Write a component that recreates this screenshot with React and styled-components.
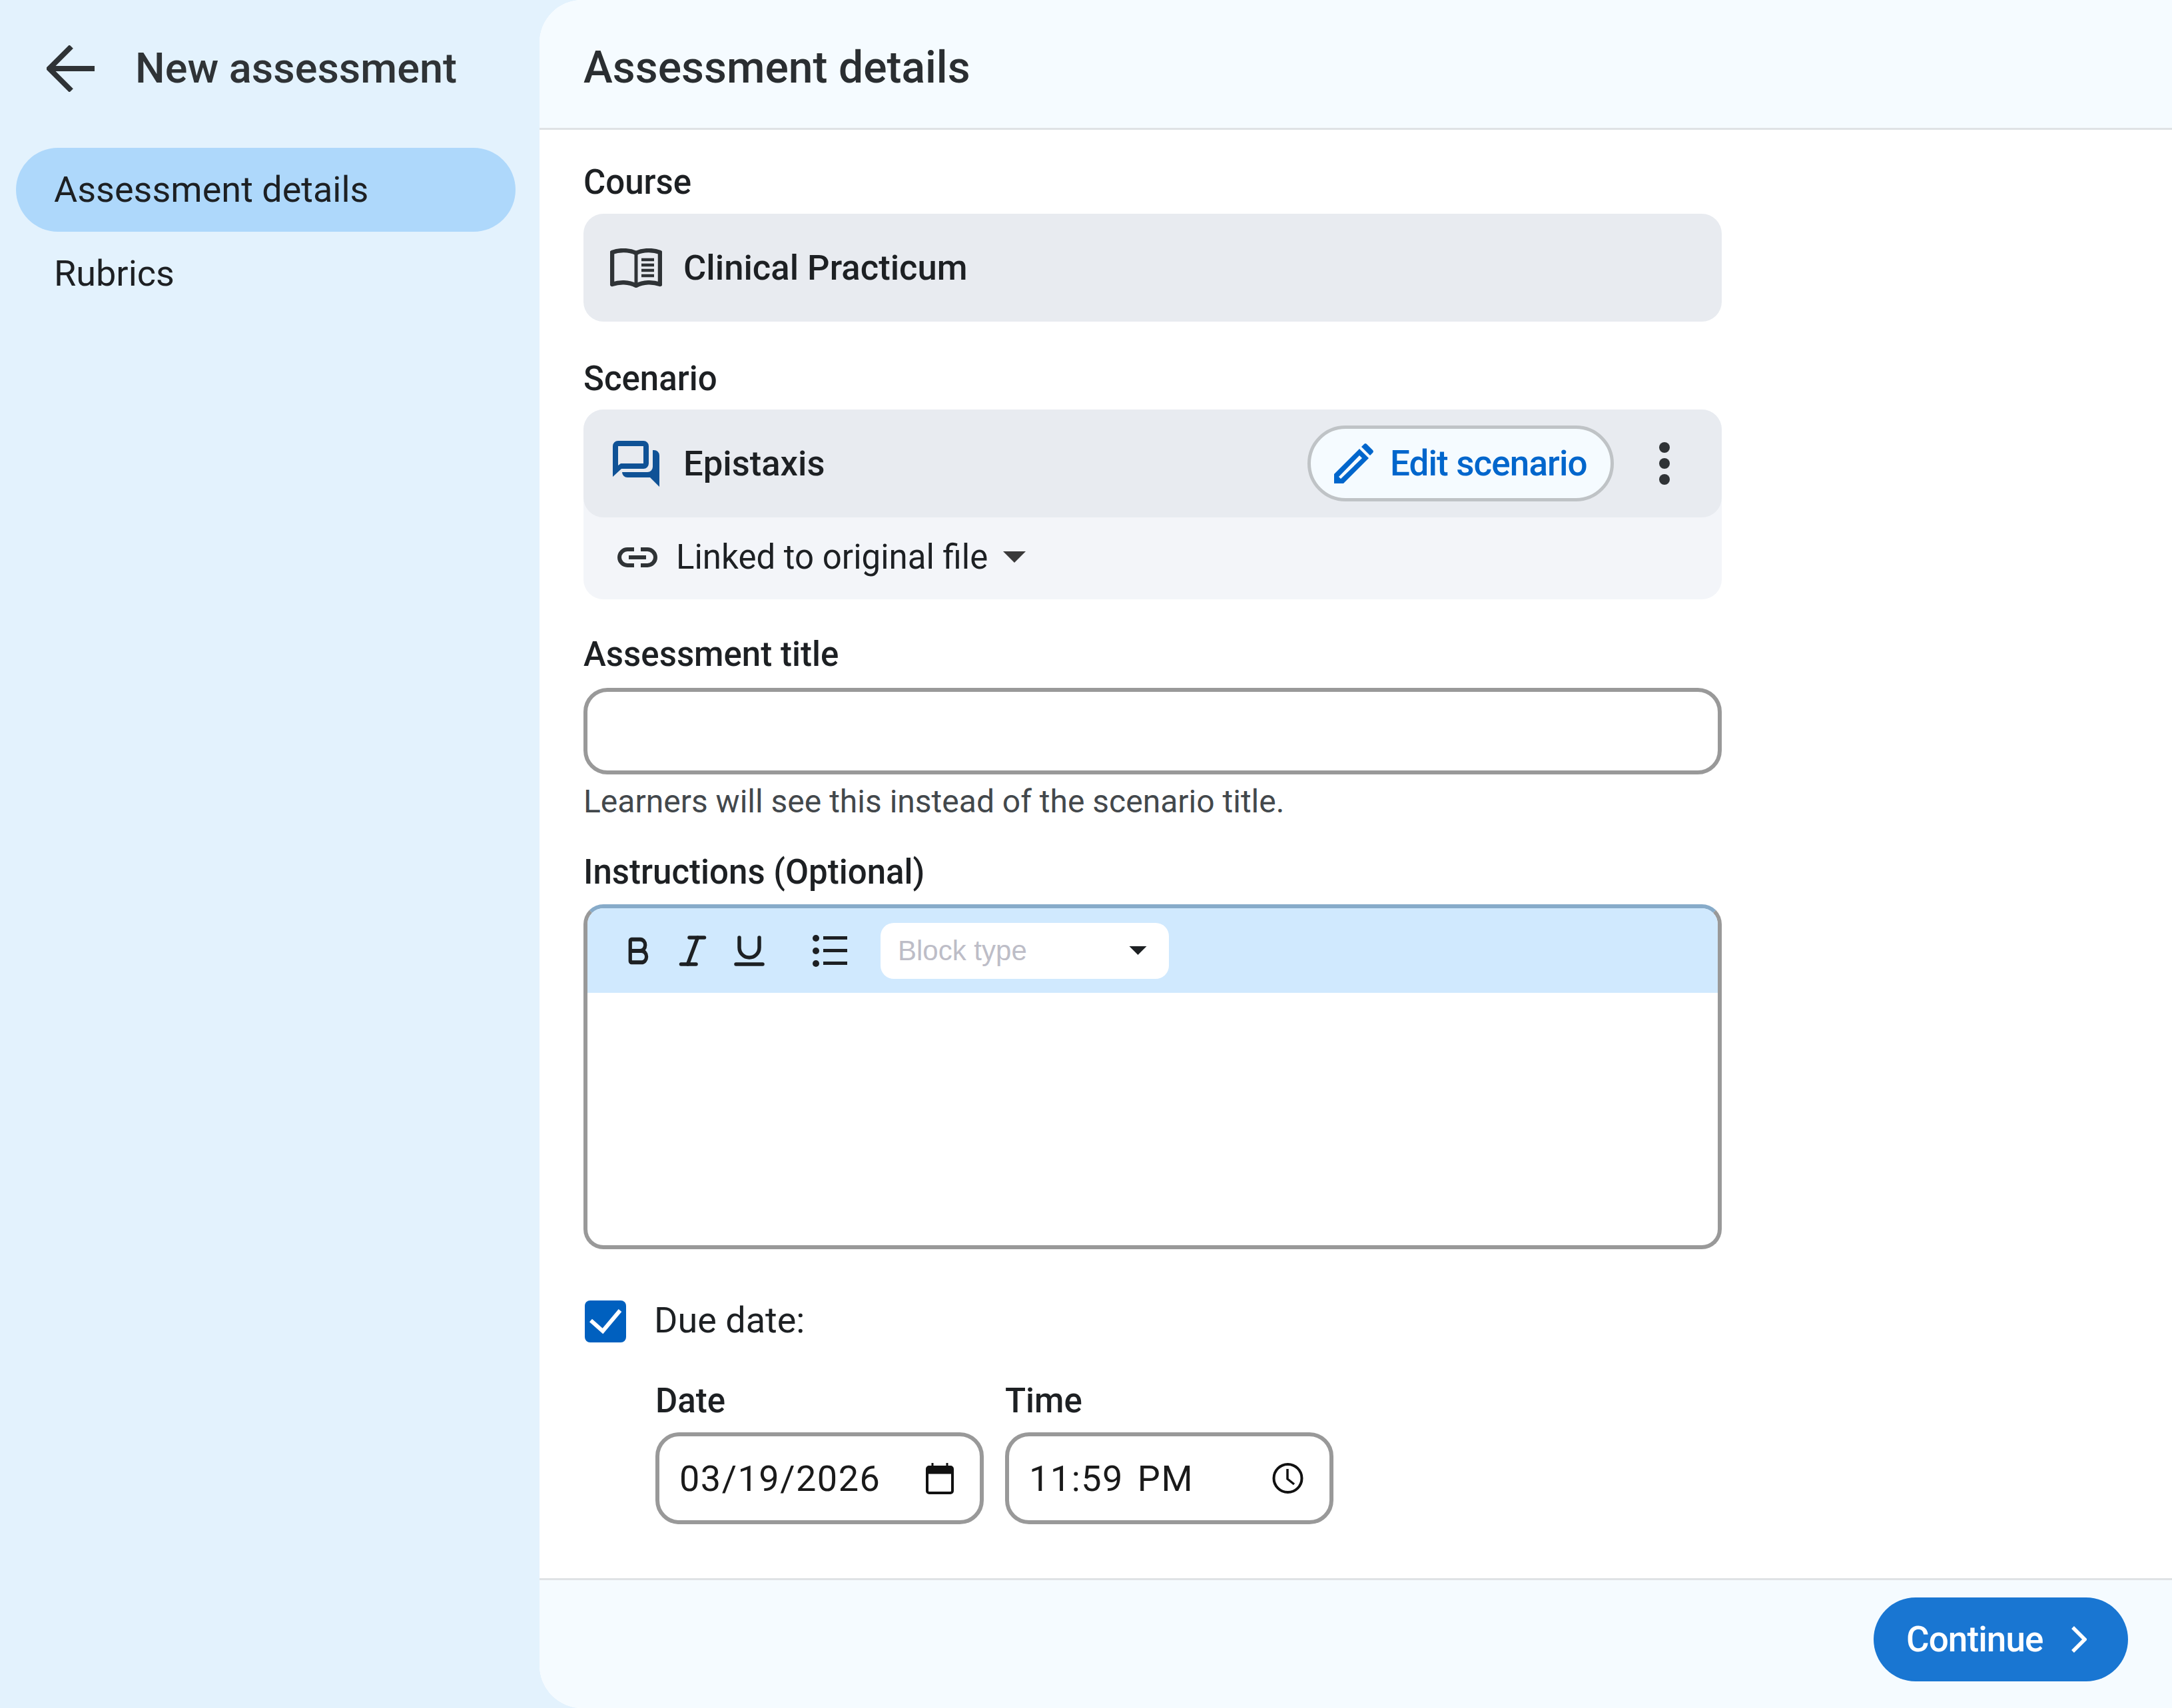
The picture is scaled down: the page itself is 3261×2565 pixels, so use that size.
import React from 'react';
import styled, { createGlobalStyle } from 'styled-components';
import { Bold, Italic, Underline } from 'lucide-react';

const Global = createGlobalStyle`
  html, body { margin: 0; padding: 0; background: #e3f2fd; }
  * { box-sizing: border-box; }
  body { font-family: Roboto, "Liberation Sans", sans-serif; color: #1d2023; }
`;

const Page = styled.div`
  display: flex;
  width: 3261px;
  height: 2565px;
  background: #e3f2fd;
  overflow: hidden;
`;
const Sidebar = styled.nav`
  width: 810px;
  flex: none;
  padding: 0 36px 0 24px;
`;
const SideHead = styled.div`
  display: flex;
  align-items: center;
  height: 205px;
  padding-left: 46px;
  gap: 61px;
  color: #2f3336;
  font-size: 63px;
  font-weight: 500;
  margin-bottom: 17px;
`;
const NavItem = styled.div`
  display: flex;
  align-items: center;
  height: 126px;
  border-radius: 63px;
  padding: 0 0 2px 57px;
  font-size: 54px;
  background: ${p => (p.$active ? '#aed8fb' : 'transparent')};
`;
const Main = styled.main`
  flex: 1;
  display: flex;
  flex-direction: column;
  background: #fff;
  border-radius: 64px 0 0 64px;
  overflow: hidden;
`;
const Header = styled.header`
  height: 195px;
  flex: none;
  display: flex;
  align-items: center;
  padding: 10px 0 0 66px;
  background: #f5fbff;
  border-bottom: 3px solid #dfe2e5;
  font-size: 66px;
  font-weight: 500;
  color: #2a2e31;
`;
const Body = styled.section`
  flex: 1;
  padding: 48px 0 0 66px;
`;
const Column = styled.div`
  width: 1709px;
`;
const Label = styled.div`
  height: 62px;
  line-height: 62px;
  font-size: 51px;
  font-weight: 500;
  margin-bottom: ${p => p.$mb ?? 18}px;
  margin-top: ${p => p.$mt ?? 0}px;
`;
const Card = styled.div`
  display: flex;
  align-items: center;
  height: 162px;
  border-radius: 30px;
  background: #e8ebf0;
  padding-left: 40px;
  gap: 32px;
  font-size: 52.6px;
  font-weight: 500;
`;
const IconSlot = styled.span`
  display: flex;
  width: 78px;
  justify-content: center;
  flex: none;
`;
const CardStack = styled.div`
  border-radius: 30px;
  background: #f3f5f9;
`;
const CardSpacer = styled.span`
  flex: 1;
`;
const EditButton = styled.div`
  display: flex;
  align-items: center;
  height: 114px;
  width: 460px;
  padding-left: 35px;
  gap: 25px;
  border: 5px solid #bfc3c6;
  border-radius: 57px;
  background: #f5fbff;
  color: #0066cc;
  font-size: 53px;
  letter-spacing: -0.9px;
  font-weight: 500;
`;
const Kebab = styled.div`
  width: 162px;
  margin-left: -32px;
  padding-right: 10px;
  display: flex;
  justify-content: center;
`;
const LinkedRow = styled.div`
  display: flex;
  align-items: center;
  height: 123px;
  padding: 0 0 4px 51px;
  font-size: 51px;
`;
const TextInput = styled.div`
  height: 130px;
  border: 6px solid #999;
  border-radius: 36px;
  background: #fff;
`;
const Hint = styled.div`
  height: 58px;
  line-height: 58px;
  margin: 12px 0 46px;
  font-size: 48px;
  color: #43484c;
`;
const Editor = styled.div`
  height: 518px;
  border: 6px solid #999;
  border-top-color: #87abc9;
  border-radius: 30px;
  overflow: hidden;
`;
const Toolbar = styled.div`
  display: flex;
  align-items: center;
  height: 127px;
  background: #d0e9fe;
  padding-left: 57px;
  color: #1d2023;
`;
const ToolIcon = styled.span`
  display: flex;
  align-items: center;
  justify-content: center;
  width: ${p => p.$w}px;
  margin-right: ${p => p.$mr}px;
  flex: none;
  & > svg { flex: none; }
`;
const BlockSelect = styled.div`
  display: flex;
  align-items: center;
  justify-content: space-between;
  width: 433px;
  height: 84px;
  border-radius: 20px;
  background: #fff;
  padding: 0 33px 0 26px;
  font-family: "Liberation Sans", Arial, sans-serif;
  font-size: 42px;
  color: #bdbdc7;
`;
const DueRow = styled.div`
  display: flex;
  align-items: center;
  margin-top: 77px;
  height: 63px;
  padding: 0 0 4px 2px;
  gap: 42px;
  font-size: 54px;
`;
const Checkbox = styled.span`
  display: flex;
  width: 62px;
  height: 63px;
  margin-top: 4px;
  border-radius: 8px;
  background: #0060bf;
  flex: none;
`;
const DateRow = styled.div`
  display: flex;
  gap: 32px;
  margin: 57px 0 0 108px;
`;
const DateField = styled.div`
  width: 493px;
`;
const DateBox = styled.div`
  display: flex;
  align-items: center;
  justify-content: space-between;
  height: 138px;
  margin-top: -2px;
  border: 6px solid #999;
  border-radius: 36px;
  padding: 0 39px 0 30px;
  font-size: 54px;
  letter-spacing: 1.5px;
  word-spacing: 6px;
  color: #1a1a1a;
`;
const Footer = styled.footer`
  height: 195px;
  flex: none;
  display: flex;
  align-items: center;
  justify-content: flex-end;
  padding: 0 66px 14px 0;
  background: #f5fbff;
  border-top: 3px solid #dfe2e5;
`;
const ContinueButton = styled.div`
  display: flex;
  align-items: center;
  justify-content: space-between;
  width: 382px;
  height: 126px;
  border-radius: 63px;
  padding: 0 62px 0 49px;
  background: #1976d2;
  color: #fff;
  font-size: 53px;
  letter-spacing: -0.9px;
  font-weight: 500;
`;

const BackArrow = () => (
  <svg width="72" height="70" viewBox="0 0 72 70" fill="none" stroke="#2f3336" strokeWidth="8">
    <path d="M72 35H6M37 2L4 35L37 68" />
  </svg>
);
const Book = () => (
  <svg width="78" height="59" viewBox="0 0 78 59" fill="none" stroke="#2f3336">
    <path strokeWidth="6.5" strokeLinejoin="round" d="M3 6C14 2 28 2 39 7C50 2 64 2 75 6V54C64 50 50 50 39 56C28 50 14 50 3 54Z" />
    <path strokeWidth="5" d="M39 7V56" />
    <path strokeWidth="4.5" d="M47 17H66M47 25H66M47 33H66M47 41H66" />
  </svg>
);
const Chat = () => (
  <svg width="70" height="69" viewBox="0 0 70 69" fill="#0f5296">
    <path fillRule="evenodd" d="M8 0H46a8 8 0 0 1 8 8V34a8 8 0 0 1-8 8H13L0 54V8a8 8 0 0 1 8-8ZM8 8V37L12 34H46V8Z" />
    <path d="M60 14h2a8 8 0 0 1 8 8V69L56 55H22a8 8 0 0 1-8-8H52a8 8 0 0 0 8-8Z" />
  </svg>
);
const Pencil = () => (
  <svg width="59" height="60" viewBox="0 0 59 60" fill="#0066cc">
    <path fillRule="evenodd" d="M0 60V46L38 8L52 22L14 60ZM7 50L10 53L42 22L38 18Z" />
    <path d="M41 5L45 1a3 3 0 0 1 4 0L58 10a3 3 0 0 1 0 4L54 18Z" />
  </svg>
);
const Dots = () => (
  <svg width="18" height="66" viewBox="0 0 18 66" fill="#2f3336">
    <circle cx="9" cy="9" r="8" />
    <circle cx="9" cy="33" r="8" />
    <circle cx="9" cy="57" r="8" />
  </svg>
);
const LinkIcon = () => (
  <svg width="60" height="30" viewBox="0 0 60 30" fill="none" stroke="#2f3336" strokeWidth="6" style={{ marginRight: 28 }}>
    <path d="M25 3H15a12 12 0 0 0 0 24H25M35 3H45a12 12 0 0 1 0 24H35M17 15H43" />
  </svg>
);
const Caret = ({ w, h, color, ml }) => (
  <svg width={w} height={h} viewBox="0 0 10 5" fill={color} style={{ marginLeft: ml }}>
    <path d="M0 0H10L5 5Z" />
  </svg>
);
const ListIcon = () => (
  <svg width="52" height="48" viewBox="0 0 52 48" fill="#1d2023">
    <circle cx="5" cy="5" r="5" />
    <circle cx="5" cy="24" r="5" />
    <circle cx="5" cy="43" r="5" />
    <path d="M16 2H52V7H16ZM16 21H52V26H16ZM16 40H52V45H16Z" />
  </svg>
);
const Check = () => (
  <svg width="62" height="63" viewBox="0 0 62 63" fill="none" stroke="#fff" strokeWidth="6">
    <path d="M9 30L27 46L53 15" />
  </svg>
);
const Calendar = () => (
  <svg width="42" height="47" viewBox="0 0 42 47" fill="none" stroke="#111">
    <rect x="2" y="6" width="38" height="39" rx="3" strokeWidth="4" />
    <path d="M2 12H40" strokeWidth="9" />
    <path d="M10 0V6M32 0V6" strokeWidth="3" />
  </svg>
);
const Clock = () => (
  <svg width="47" height="48" viewBox="0 0 47 48" fill="none" stroke="#111" strokeWidth="4">
    <circle cx="23.5" cy="24" r="21" />
    <path d="M23 10V25L33 33" strokeWidth="3.5" />
  </svg>
);
const Chevron = () => (
  <svg width="24" height="40" viewBox="0 0 24 40" fill="none" stroke="#fff" strokeWidth="5.5">
    <path d="M3 2L21 20L3 38" />
  </svg>
);

export default function App() {
  return (
    <Page>
      <Global />
      <Sidebar>
        <SideHead>
          <BackArrow />
          <span>New assessment</span>
        </SideHead>
        <NavItem $active>Assessment details</NavItem>
        <NavItem>Rubrics</NavItem>
      </Sidebar>
      <Main>
        <Header>Assessment details</Header>
        <Body>
          <Column>
            <Label $mb={16}>Course</Label>
            <Card>
              <IconSlot><Book /></IconSlot>
              Clinical Practicum
            </Card>
            <Label $mt={55} $mb={15}>Scenario</Label>
            <CardStack>
              <Card>
                <IconSlot><Chat /></IconSlot>
                Epistaxis
                <CardSpacer />
                <EditButton><Pencil />Edit scenario</EditButton>
                <Kebab><Dots /></Kebab>
              </Card>
              <LinkedRow>
                <LinkIcon />
                Linked to original file
                <Caret w={34} h={17} color="#3a3a3a" ml={23} />
              </LinkedRow>
            </CardStack>
            <Label $mt={52} $mb={19}>Assessment title</Label>
            <TextInput />
            <Hint>Learners will see this instead of the scenario title.</Hint>
            <Label $mb={17}>Instructions (Optional)</Label>
            <Editor>
              <Toolbar>
                <ToolIcon $w={36} $mr={44}><Bold width={45} height={52} preserveAspectRatio="none" strokeWidth={2.8} /></ToolIcon>
                <ToolIcon $w={42} $mr={41}><Italic size={60} strokeWidth={2.2} /></ToolIcon>
                <ToolIcon $w={46} $mr={72}><Underline size={60} strokeWidth={2.2} /></ToolIcon>
                <ToolIcon $w={52} $mr={50}><ListIcon /></ToolIcon>
                <BlockSelect>
                  Block type
                  <Caret w={27} h={13} color="#1d2023" />
                </BlockSelect>
              </Toolbar>
            </Editor>
            <DueRow>
              <Checkbox><Check /></Checkbox>
              Due date:
            </DueRow>
            <DateRow>
              <DateField>
                <Label>Date</Label>
                <DateBox>03/19/2026<Calendar /></DateBox>
              </DateField>
              <DateField>
                <Label>Time</Label>
                <DateBox>11:59 PM<Clock /></DateBox>
              </DateField>
            </DateRow>
          </Column>
        </Body>
        <Footer>
          <ContinueButton>Continue<Chevron /></ContinueButton>
        </Footer>
      </Main>
    </Page>
  );
}
